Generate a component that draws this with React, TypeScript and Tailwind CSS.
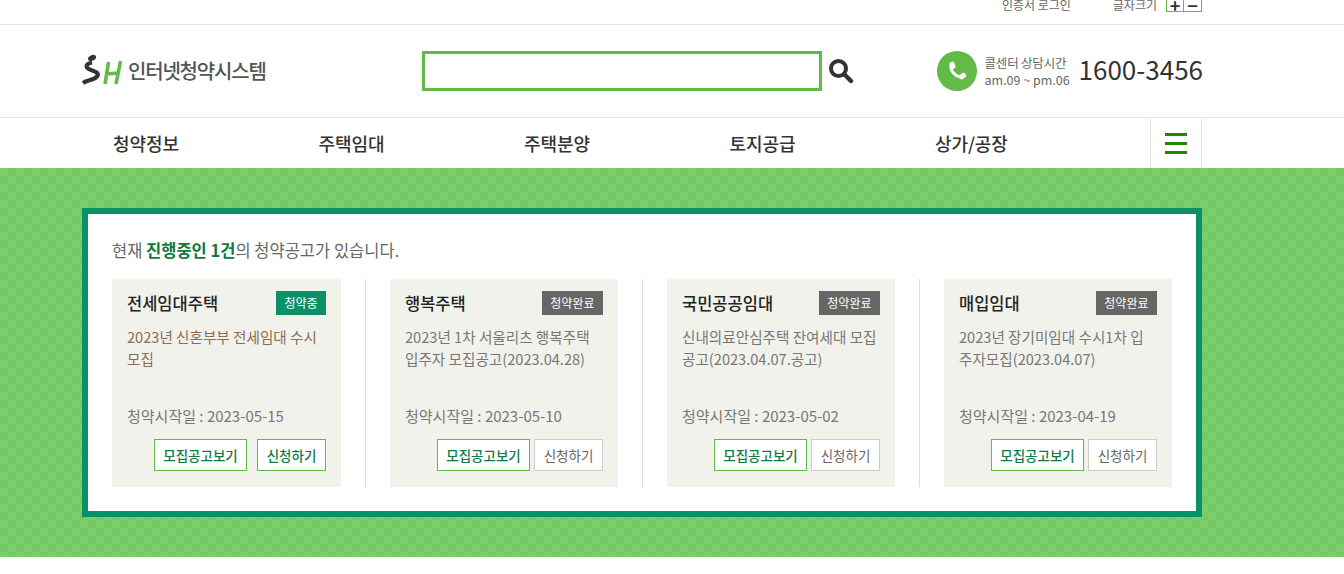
import React from 'react';

const font = '"Noto Sans CJK KR", "Noto Sans", sans-serif';

const notices = [
  {
    type: '전세임대주택',
    status: '청약중',
    active: true,
    title: '2023년 신혼부부 전세임대 수시 모집',
    date: '2023-05-15',
  },
  {
    type: '행복주택',
    status: '청약완료',
    active: false,
    title: '2023년 1차 서울리츠 행복주택 입주자 모집공고(2023.04.28)',
    date: '2023-05-10',
  },
  {
    type: '국민공공임대',
    status: '청약완료',
    active: false,
    title: '신내의료안심주택 잔여세대 모집공고(2023.04.07.공고)',
    date: '2023-05-02',
  },
  {
    type: '매입임대',
    status: '청약완료',
    active: false,
    title: '2023년 장기미임대 수시1차 입주자모집(2023.04.07)',
    date: '2023-04-19',
  },
];

const menus = ['청약정보', '주택임대', '주택분양', '토지공급', '상가/공장'];

const Logo = () => (
  <svg width="40" height="32" viewBox="0 0 40 32" className="shrink-0">
    <ellipse cx="10" cy="4" rx="4.2" ry="2.8" fill="#333" transform="rotate(-25 10 4)" />
    <path d="M10 8.5 C3 10 3 14 9 16 C15 18 18 20 14 23.5 C10 26.5 5 26 1 29" stroke="#333" strokeWidth="4.2" fill="none" />
    <path d="M26.5 8 L23 30 M38.5 7 L34 30 M24 20 L37 19" stroke="#62bb46" strokeWidth="3.6" fill="none" />
  </svg>
);

const SearchIcon = () => (
  <svg width="26" height="26" viewBox="0 0 26 26" className="shrink-0">
    <circle cx="10.5" cy="10.5" r="7.5" stroke="#333" strokeWidth="4" fill="none" />
    <path d="M16.5 16.5 L23 23" stroke="#333" strokeWidth="4.4" strokeLinecap="round" />
  </svg>
);

const PhoneIcon = () => (
  <svg width="20" height="20" viewBox="0 0 20 20">
    <path d="M4.5 3.5 C2 8 8 17 16 16" stroke="#fff" strokeWidth="3" fill="none" />
    <rect x="3" y="0.8" width="5" height="7" rx="1.6" fill="#fff" transform="rotate(-20 5.5 4.3)" />
    <rect x="12" y="12.6" width="7" height="5" rx="1.6" fill="#fff" transform="rotate(-35 15.5 15)" />
  </svg>
);

const NoticeCard = ({ notice }: { notice: (typeof notices)[number] }) => (
  <div className="h-[208px] bg-[#f1f2ec] px-[15px] pt-[12px] flex flex-col">
    <div className="flex items-center justify-between h-[24px]">
      <strong className="text-[16.5px] font-medium text-[#222]">{notice.type}</strong>
      <span
        className={
          notice.active
            ? 'h-[24px] px-[8.5px] flex items-center text-[12px] text-white bg-[#0a9167]'
            : 'h-[24px] px-[8.5px] flex items-center text-[12px] text-white bg-[#666]'
        }
      >
        {notice.status}
      </span>
    </div>
    <p
      className={
        notice.active
          ? 'mt-[11px] h-[66px] pr-[2px] text-[14.6px] leading-[22px] text-[#8a6d52]'
          : 'mt-[11px] h-[66px] pr-[2px] text-[14.6px] leading-[22px] text-[#777]'
      }
    >
      {notice.title}
    </p>
    <p className="mt-[13px] text-[15px] leading-[22px] text-[#777]">청약시작일 : {notice.date}</p>
    <div className="mt-[12px] flex justify-end">
      <a className="w-[93px] h-[32px] flex items-center justify-center bg-white border border-[#62bb46] text-[13.5px] font-medium text-[#117a45]">
        모집공고보기
      </a>
      <a
        className={
          notice.active
            ? 'ml-[10px] w-[69px] h-[32px] flex items-center justify-center bg-white border border-[#62bb46] text-[13.5px] font-medium text-[#117a45]'
            : 'ml-[4px] w-[69px] h-[32px] flex items-center justify-center bg-white border border-[#ccc] text-[13.5px] text-[#666]'
        }
      >
        신청하기
      </a>
    </div>
  </div>
);

const App = () => {
  return (
    <div className="w-[1344px] h-[574px] bg-white overflow-hidden" style={{ fontFamily: font }}>
      {/* Top bar */}
      <div className="h-[25px] border-b border-[#e5e5e5] overflow-hidden">
        <div className="w-[1120px] ml-[82px] flex justify-end items-start text-[12px] text-[#666] leading-[12px] -mt-[1px]">
          <span>인증서 로그인</span>
          <span className="ml-[42px]">글자크기</span>
          <div className="ml-[9px] flex h-[14px] border border-[#62bb46] text-[#333] -mt-px">
            <span className="w-[17px] border-r border-[#62bb46] flex items-center justify-center text-[18px] font-bold leading-none">+</span>
            <span className="w-[17px] flex items-center justify-center text-[18px] font-bold leading-none">−</span>
          </div>
        </div>
      </div>

      {/* Header */}
      <div className="h-[93px] border-b border-[#e5e5e5]">
        <div className="w-[1120px] ml-[82px] h-full flex items-center">
          <div className="w-[340px] flex items-center -mt-[2px]">
            <Logo />
            <span className="ml-[6px] mt-[1px] text-[20px] font-medium text-[#555] tracking-[-1.2px]">인터넷청약시스템</span>
          </div>
          <div className="w-[400px] h-[40px] border-[3px] border-[#62bb46] -mt-[1px]" />
          <div className="ml-[6px] -mt-[1px]">
            <SearchIcon />
          </div>
          <div className="ml-auto -mr-px flex items-center -mt-[1px]">
            <div className="w-[40px] h-[40px] rounded-full bg-[#62bb46] flex items-center justify-center">
              <PhoneIcon />
            </div>
            <div className="ml-[8px] w-[85px] whitespace-nowrap text-[12.5px] leading-[17px] text-[#666]">
              <div className="tracking-[-0.2px]">콜센터 상담시간</div>
              <div>am.09 ~ pm.06</div>
            </div>
            <span className="ml-[9px] -mt-[3px] text-[26px] text-[#333] leading-none">1600-3456</span>
          </div>
        </div>
      </div>

      {/* Nav */}
      <div className="h-[50px]">
        <div className="w-[1120px] ml-[82px] h-full flex items-center">
          {menus.map(menu => (
            <a key={menu} className="w-[205.5px] pl-[31px] text-[18px] font-medium text-[#333] tracking-[-0.1px]">
              {menu}
            </a>
          ))}
          <div className="ml-auto w-[52px] h-full border-x border-[#e5e5e5] flex flex-col items-center justify-center gap-[6px]">
            <span className="w-[22px] h-[3px] bg-[#1e8700]" />
            <span className="w-[22px] h-[3px] bg-[#1e8700]" />
            <span className="w-[22px] h-[3px] bg-[#1e8700]" />
          </div>
        </div>
      </div>

      {/* Notice section */}
      <div className="h-[389px] pt-[40px] bg-[repeating-conic-gradient(#73c963_0_25%,#7ccf6c_0_50%)] bg-[length:16px_16px]">
        <div className="w-[1120px] h-[309px] ml-[82px] bg-white border-[6px] border-[#0a9167] px-[24px] pt-[24px]">
          <p className="text-[16.5px] leading-[24px] text-[#666]">
            현재 <strong className="font-bold text-[#0c7a3e]">진행중인 1건</strong>의 청약공고가 있습니다.
          </p>
          <div className="mt-[17px] flex">
            {notices.map((notice, i) => (
              <div
                key={notice.type}
                className={
                  i === 0
                    ? 'w-[254px] pr-[24px] border-r border-[#ddd]'
                    : i === 3
                      ? 'w-[252px] pl-[24px]'
                      : 'w-[277px] px-[24px] border-r border-[#ddd]'
                }
              >
                <NoticeCard notice={notice} />
              </div>
            ))}
          </div>
        </div>
      </div>
    </div>
  );
};

export default App;
